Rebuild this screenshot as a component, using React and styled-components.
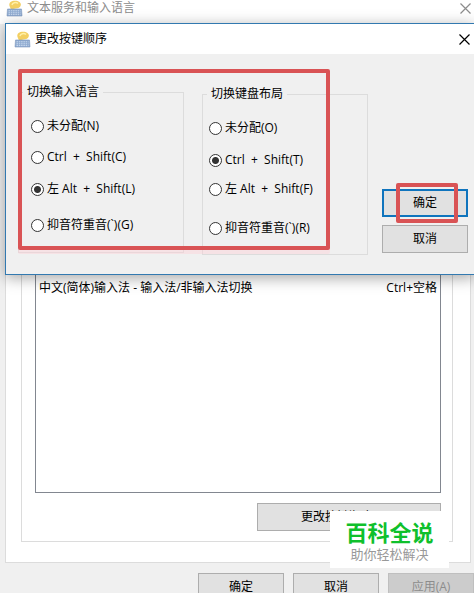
import React from 'react';
import styled, { createGlobalStyle } from 'styled-components';

const GlobalStyle = createGlobalStyle`
    * {
        box-sizing: border-box;
    }

    body {
        margin: 0;
        overflow: hidden;
        background-color: #f0f0f0;
        color: #000000;
        font-family: "Open Sans", "Noto Sans CJK SC", sans-serif;
        font-size: 12px;
        line-height: 16px;
    }
`;

const Page = styled.div`
    position: relative;
    min-height: 100vh;
`;

const TitleBar = styled.header`
    display: flex;
    align-items: center;
    gap: 4px;
    height: ${({ $inactive }) => ($inactive ? '24px' : '30px')};
    padding: ${({ $inactive }) => ($inactive ? '0 3px 8px 6px' : '0 4px 0 8px')};
    background-color: #ffffff;
    color: ${({ $inactive }) => ($inactive ? '#8c8c8c' : '#000000')};
`;

const Title = styled.h1`
    flex: 1;
    margin: 0;
    font-size: 12px;
    font-weight: 400;
`;

const CloseButton = styled.button`
    display: flex;
    padding: 0;
    border: 0;
    background: none;
    color: inherit;
`;

/* Settings window behind the dialog */
const SettingsBody = styled.main`
    padding: 0 3px 0 5px;
`;

const TabPage = styled.section`
    padding: 0 17px 20px 15px;
    border: 1px solid #dcdcdc;
    background-color: #ffffff;
`;

const HotkeyGroup = styled.section`
    display: flex;
    flex-direction: column;
    align-items: flex-end;
    gap: 10px;
    padding: 16px 11px 10px 13px;
    border: 1px solid #dcdcdc;
`;

const HotkeyList = styled.ul`
    width: 100%;
    height: 451px;
    margin: 0;
    padding: 237px 3px 0;
    border: 1px solid #828790;
    list-style: none;
`;

const HotkeyItem = styled.li`
    display: flex;
    justify-content: space-between;
`;

const Button = styled.button`
    width: ${({ $wide }) => ($wide ? '184px' : '86px')};
    height: 28px;
    padding: 0;
    border: ${({ $primary }) => ($primary ? '2px solid #0f74bd' : '1px solid #adadad')};
    background-color: #e1e1e1;
    color: #000000;
    font: inherit;

    &:disabled {
        border-color: #bfbfbf;
        background-color: #cccccc;
        color: #8c8c8c;
    }
`;

const Footer = styled.footer`
    display: flex;
    justify-content: flex-end;
    gap: 9px;
    padding-top: 10px;
`;

/* Dialog */
const Dialog = styled.section`
    position: absolute;
    top: 23px;
    left: 5px;
    right: -1px;
    border: 1px solid #3279b0;
    background-color: #f0f0f0;
    box-shadow: 0 3px 14px rgba(0, 0, 0, 0.35);
`;

const DialogBody = styled.form`
    display: flex;
    align-items: flex-end;
    padding: 30px 6px 19px 12px;
`;

const Group = styled.fieldset`
    width: 166px;
    margin: 0 0 ${({ $raised }) => ($raised ? '2px' : '0')};
    padding: 0 0 18px;
    border: 1px solid #dcdcdc;

    & + & {
        margin-left: 18px;
    }
`;

const Legend = styled.legend`
    margin-left: 4px;
    padding: 0 4px;
`;

const Options = styled.div`
    display: grid;
    grid-template-rows: ${({ $rows }) => $rows};
    align-items: start;
    padding: 17px 0 0 ${({ $inset }) => $inset};
`;

const Option = styled.label`
    display: flex;
    align-items: center;
    gap: 3px;
    height: 18px;
    white-space: pre;
`;

const Radio = styled.input`
    width: 13px;
    height: 13px;
    margin: 0;
    border: 1px solid #333333;
    border-radius: 50%;
    appearance: none;
    background-color: #ffffff;

    &:checked {
        background-image: radial-gradient(circle, #333333 3px, transparent 4px);
    }
`;

const Actions = styled.div`
    display: flex;
    flex-direction: column;
    gap: 8px;
    margin: 0 0 2px auto;
`;

const ActionSlot = styled.div`
    position: relative;
    display: flex;
`;

/* Red markers drawn over the dialog */
const Marker = styled.div`
    position: absolute;
    border: 4px solid #d95355;
    border-radius: 2px;
    pointer-events: none;
`;

const GroupsMarker = styled(Marker)`
    top: 45px;
    left: 12px;
    width: 312px;
    height: 181px;
    box-shadow: 0 4px 0 rgba(255, 205, 212, 0.4);
`;

const ConfirmMarker = styled(Marker)`
    top: -6px;
    left: 14px;
    right: 10px;
    bottom: -6px;
`;

/* Site badge in the corner */
const Badge = styled.aside`
    position: absolute;
    top: 511px;
    right: 25px;
    display: flex;
    flex-direction: column;
    align-items: center;
    width: 119px;
    padding: 8px 0 6px;
    background-color: #ffffff;
`;

const BadgeName = styled.strong`
    color: #0fc02c;
    font-size: 22px;
    font-weight: 700;
    line-height: 27px;
`;

const BadgeText = styled.span`
    color: #999999;
    font-size: 13px;
`;

const KeyboardIcon = () => (
    <svg width="17" height="17" viewBox="0 0 17 17" aria-hidden="true">
        <path d="M3.500 6C2.500 2.500 5.500.7 9 .7s6.500 1.800 5.800 4.600C14.300 7.500 12 8.500 9.500 8.500L5 9.500z" fill="#f3cf62" />
        <path d="M6 5C6.500 2.500 10 1.800 12 3.500" stroke="#fff0a8" strokeWidth="1.500" fill="none" />
        <path d="M1.500 9h14l.5 7H1z" fill="#8eaad0" stroke="#8099bd" strokeWidth=".6" />
        <path d="M2.500 10.800h12M2.500 12.800h12M2.500 14.600h12" stroke="#dce8f7" strokeWidth=".8" strokeDasharray="1.500 .8" />
    </svg>
);

const CloseIcon = () => (
    <svg width="11" height="11" viewBox="0 0 11 11" aria-hidden="true">
        <path d="M.5.5l10 10M10.500.5l-10 10" stroke="currentColor" strokeWidth="1.200" />
    </svg>
);

const GROUPS = [
    {
        name: 'language',
        title: '切换输入语言',
        rows: '31px 32px 36px 18px',
        inset: '12px',
        selected: 2,
        raised: true,
        options: ['未分配(N)', 'Ctrl  +  Shift(C)', '左 Alt  +  Shift(L)', '抑音符重音(`)(G)'],
    },
    {
        name: 'layout',
        title: '切换键盘布局',
        rows: '32px 29px 39px 17px',
        inset: '6px',
        selected: 1,
        raised: false,
        options: ['未分配(O)', 'Ctrl  +  Shift(T)', '左 Alt  +  Shift(F)', '抑音符重音(`)(R)'],
    },
];

const OptionGroup = ({ group }) => (
    <Group $raised={group.raised}>
        <Legend>{group.title}</Legend>
        <Options $rows={group.rows} $inset={group.inset}>
            {group.options.map((option, index) => (
                <Option key={option}>
                    <Radio type="radio" name={group.name} defaultChecked={index === group.selected} />
                    {option}
                </Option>
            ))}
        </Options>
    </Group>
);

const KeySequenceDialog = () => (
    <Dialog role="dialog" aria-labelledby="dialog-title">
        <TitleBar>
            <KeyboardIcon />
            <Title as="h2" id="dialog-title">更改按键顺序</Title>
            <CloseButton type="button" aria-label="关闭">
                <CloseIcon />
            </CloseButton>
        </TitleBar>
        <DialogBody>
            {GROUPS.map((group) => (
                <OptionGroup key={group.name} group={group} />
            ))}
            <Actions>
                <ActionSlot>
                    <Button type="button" $primary>确定</Button>
                    <ConfirmMarker />
                </ActionSlot>
                <Button type="button">取消</Button>
            </Actions>
        </DialogBody>
        <GroupsMarker />
    </Dialog>
);

const App = () => {
    return (
        <Page>
            <GlobalStyle />
            <TitleBar $inactive>
                <KeyboardIcon />
                <Title>文本服务和输入语言</Title>
                <CloseButton type="button" aria-label="关闭">
                    <CloseIcon />
                </CloseButton>
            </TitleBar>
            <SettingsBody>
                <TabPage>
                    <HotkeyGroup>
                        <HotkeyList>
                            <HotkeyItem>
                                <span>中文(简体)输入法 - 输入法/非输入法切换</span>
                                <span>Ctrl+空格</span>
                            </HotkeyItem>
                        </HotkeyList>
                        <Button type="button" $wide>更改按键顺序(C)...</Button>
                    </HotkeyGroup>
                </TabPage>
            </SettingsBody>
            <Footer>
                <Button type="button">确定</Button>
                <Button type="button">取消</Button>
                <Button type="button" disabled>应用(A)</Button>
            </Footer>
            <KeySequenceDialog />
            <Badge>
                <BadgeName>百科全说</BadgeName>
                <BadgeText>助你轻松解决</BadgeText>
            </Badge>
        </Page>
    );
};

export default App;
